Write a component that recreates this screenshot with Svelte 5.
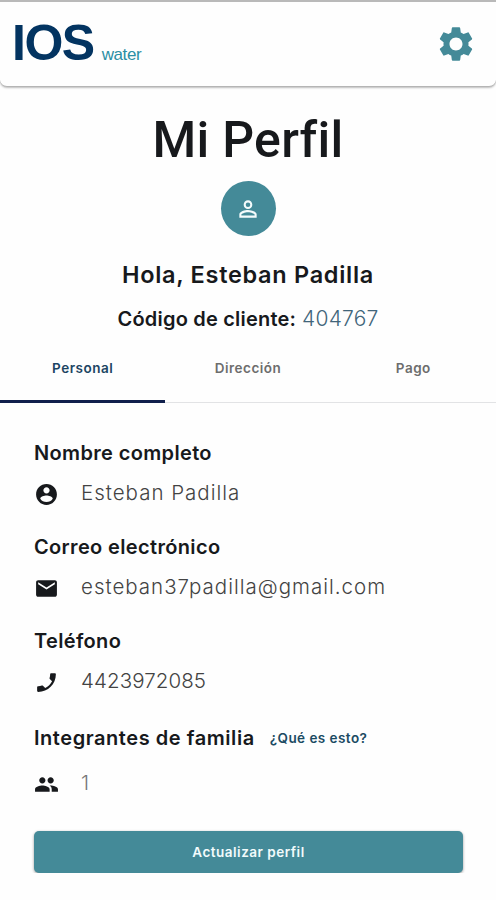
<script>
  const user = {
    name: 'Esteban Padilla',
    code: '404767'
  }

  const tabs = [
    { id: 'personal', label: 'Personal' },
    { id: 'direccion', label: 'Dirección' },
    { id: 'pago', label: 'Pago' }
  ]
  let activeTab = 'personal'

  const icons = {
    settings:
      'M19.43 12.98c.04-.32.07-.64.07-.98s-.03-.66-.07-.98l2.11-1.65c.19-.15.24-.42.12-.64l-2-3.46c-.12-.22-.39-.3-.61-.22l-2.49 1c-.52-.4-1.08-.73-1.69-.98l-.38-2.65C14.46 2.18 14.25 2 14 2h-4c-.25 0-.46.18-.49.42l-.38 2.65c-.61.25-1.17.59-1.69.98l-2.49-1c-.23-.09-.49 0-.61.22l-2 3.46c-.13.22-.07.49.12.64l2.11 1.65c-.04.32-.07.65-.07.98s.03.66.07.98l-2.11 1.65c-.19.15-.24.42-.12.64l2 3.46c.12.22.39.3.61.22l2.49-1c.52.4 1.08.73 1.69.98l.38 2.65c.03.24.24.42.49.42h4c.25 0 .46-.18.49-.42l.38-2.65c.61-.25 1.17-.59 1.69-.98l2.49 1c.23.09.49 0 .61-.22l2-3.46c.12-.22.07-.49-.12-.64l-2.11-1.65zM12 15.9c-2.15 0-3.9-1.75-3.9-3.9s1.75-3.9 3.9-3.9 3.9 1.75 3.9 3.9-1.75 3.9-3.9 3.9z',
    person:
      'M12 5.9a2.1 2.1 0 1 1 0 4.2 2.1 2.1 0 0 1 0-4.2m0 9c2.97 0 6.1 1.46 6.1 2.1v1.1H5.9V17c0-.64 3.13-2.1 6.1-2.1M12 4C9.79 4 8 5.79 8 8s1.79 4 4 4 4-1.79 4-4-1.79-4-4-4zm0 9c-2.67 0-8 1.34-8 4v3h16v-3c0-2.66-5.33-4-8-4z',
    account:
      'M12 2C6.48 2 2 6.48 2 12s4.48 10 10 10 10-4.48 10-10S17.52 2 12 2zm0 3c1.66 0 3 1.34 3 3s-1.34 3-3 3-3-1.34-3-3 1.34-3 3-3zm0 14.2c-2.5 0-4.71-1.28-6-3.22.03-1.99 4-3.08 6-3.08 1.99 0 5.97 1.09 6 3.08-1.29 1.94-3.5 3.22-6 3.22z',
    email:
      'M20 4H4c-1.1 0-1.99.9-1.99 2L2 18c0 1.1.9 2 2 2h16c1.1 0 2-.9 2-2V6c0-1.1-.9-2-2-2zm0 4l-8 5-8-5V6l8 5 8-5v2z',
    phone:
      'M17.38 10.79c-1.44 2.83-3.76 5.14-6.59 6.59l-2.2-2.2c-.27-.27-.67-.36-1.02-.24-1.12.37-2.33.57-3.57.57-.55 0-1 .45-1 1V20c0 .55.45 1 1 1 9.39 0 17-7.61 17-17 0-.55-.45-1-1-1h-3.5c-.55 0-1 .45-1 1 0 1.25-.2 2.45-.57 3.57-.11.35-.03.74.25 1.02l2.2 2.2z',
    group:
      'M16 11c1.66 0 2.99-1.34 2.99-3S17.66 5 16 5c-1.66 0-3 1.34-3 3s1.34 3 3 3zm-8 0c1.66 0 2.99-1.34 2.99-3S9.66 5 8 5C6.34 5 5 6.34 5 8s1.34 3 3 3zm0 2c-2.33 0-7 1.17-7 3.5V19h14v-2.5c0-2.33-4.67-3.5-7-3.5zm8 0c-.29 0-.62.02-.97.05 1.16.84 1.97 1.97 1.97 3.45V19h6v-2.5c0-2.33-4.67-3.5-7-3.5z'
  }

  const fields = [
    { id: 'nombre', label: 'Nombre completo', value: user.name, icon: icons.account },
    { id: 'correo', label: 'Correo electrónico', value: 'esteban37padilla@gmail.com', icon: icons.email },
    { id: 'telefono', label: 'Teléfono', value: '4423972085', icon: icons.phone },
    { id: 'familia', label: 'Integrantes de familia', value: '1', icon: icons.group, help: '¿Qué es esto?' }
  ]
</script>

<header class="topbar">
  <div class="logo"><span class="logo-main">IOS</span><span class="logo-sub">water</span></div>
  <button class="settings" aria-label="Ajustes">
    <svg viewBox="0 0 24 24"><path d={icons.settings} /></svg>
  </button>
</header>

<main>
  <section class="intro">
    <h1>Mi Perfil</h1>
    <div class="avatar">
      <svg viewBox="0 0 24 24"><path d={icons.person} /></svg>
    </div>
    <h2>Hola, {user.name}</h2>
    <p class="client"><span class="client-label">Código de cliente:</span><span class="client-code">{user.code}</span></p>
  </section>

  <nav class="tabs">
    {#each tabs as tab}
      <button class="tab" class:active={activeTab === tab.id} on:click={() => (activeTab = tab.id)}>{tab.label}</button>
    {/each}
  </nav>

  <section class="fields">
    {#each fields as field}
      <div class="field {field.id}">
        <div class="field-head">
          <h3>{field.label}</h3>
          {#if field.help}<a class="help" href="#ayuda">{field.help}</a>{/if}
        </div>
        <div class="field-row">
          <svg viewBox="0 0 24 24"><path d={field.icon} /></svg>
          <span class="value">{field.value}</span>
        </div>
      </div>
    {/each}
    <button class="submit">Actualizar perfil</button>
  </section>
</main>

<style>
  :global(body) {
    background: #fefefe;
    color: #17191c;
    font-family: Inter, 'Liberation Sans', sans-serif;
  }
  h1,
  h2,
  h3,
  p {
    margin: 0;
    font-weight: 600;
    white-space: nowrap;
  }
  button {
    border: 0;
    padding: 0;
    background: none;
    font-family: inherit;
  }
  svg {
    display: block;
    fill: currentColor;
  }

  .topbar {
    box-sizing: border-box;
    height: 87px;
    padding: 0 20px 0 12px;
    display: flex;
    justify-content: space-between;
    align-items: center;
    background: #fefefe;
    border-top: 2px solid #b9b9b9;
    border-bottom: 1px solid #b5b5b5;
    border-radius: 0 0 7px 7px;
    box-shadow: 0 1px 2px rgba(0, 0, 0, 0.25);
  }
  .logo {
    display: flex;
    align-items: baseline;
    padding-top: 10px;
    font-family: 'Liberation Sans', Arial, sans-serif;
    line-height: 50px;
  }
  .logo-main {
    color: #033461;
    font-size: 50px;
    font-weight: bold;
    letter-spacing: -1.5px;
  }
  .logo-sub {
    margin-left: 8px;
    color: #2b8fa5;
    font-size: 17px;
    letter-spacing: -0.4px;
  }
  .settings {
    color: #448a98;
  }
  .settings svg {
    width: 40px;
    height: 40px;
  }

  .intro {
    display: flex;
    flex-direction: column;
    align-items: center;
  }
  h1 {
    margin-top: 23px;
    font-family: Roboto, sans-serif;
    font-size: 50px;
    font-weight: 500;
    line-height: 60px;
    letter-spacing: 0.3px;
  }
  .avatar {
    display: flex;
    justify-content: center;
    align-items: center;
    width: 55px;
    height: 55px;
    margin-top: 11px;
    border-radius: 50%;
    background: #448a98;
    color: #f4fbfc;
  }
  .avatar svg {
    width: 26px;
    height: 26px;
  }
  h2 {
    margin-top: 24px;
    font-size: 23.5px;
    line-height: 30px;
    letter-spacing: 0.7px;
  }
  .client {
    display: flex;
    align-items: baseline;
    gap: 6px;
    margin-top: 14px;
    line-height: 30px;
  }
  .client-label {
    font-size: 20px;
    letter-spacing: 0.2px;
  }
  .client-code {
    color: #41657a;
    font-size: 21px;
    font-weight: 300;
    letter-spacing: 0.2px;
  }

  .tabs {
    box-sizing: border-box;
    display: grid;
    grid-template-columns: repeat(3, 1fr);
    height: 69px;
    border-bottom: 1px solid #e2e3e5;
  }
  .tab {
    box-sizing: border-box;
    height: 69px;
    padding-top: 2px;
    border-bottom: 3px solid transparent;
    color: #6d6d6d;
    font-size: 13.5px;
    font-weight: 600;
    letter-spacing: 0.5px;
  }
  .tab.active {
    color: #1c4563;
    border-color: #101f4c;
  }

  .fields {
    padding: 35px 33px 0 34px;
  }
  .field {
    height: 94px;
  }
  .field-head {
    display: flex;
    align-items: center;
    gap: 15px;
    line-height: 30px;
  }
  h3 {
    font-size: 20px;
    letter-spacing: 0.35px;
  }
  .help {
    color: #1b4b63;
    font-size: 13.5px;
    font-weight: 600;
    letter-spacing: 0.45px;
    text-decoration: none;
  }
  .field-row {
    display: flex;
    align-items: center;
    gap: 22px;
    height: 30px;
    margin-top: 10px;
  }
  .field-row svg {
    flex: none;
    width: 25px;
    height: 25px;
    margin-top: 2px;
  }
  .value {
    color: #434343;
    font-size: 20.5px;
    font-weight: 300;
    line-height: 30px;
    letter-spacing: 1px;
  }
  .telefono .value {
    letter-spacing: 0.1px;
  }
  .familia {
    height: 93px;
    padding-top: 3px;
  }
  .familia h3 {
    letter-spacing: 0.55px;
  }
  .familia .field-row {
    margin-top: 15px;
  }
  .familia .value {
    color: #777;
  }

  .submit {
    display: block;
    width: 100%;
    height: 42px;
    margin-top: 15px;
    border-radius: 5px;
    background: #448a98;
    box-shadow: 0 1px 3px rgba(0, 0, 0, 0.4);
    color: #f2fbfc;
    font-size: 13.5px;
    font-weight: 600;
    letter-spacing: 0.5px;
  }
</style>
